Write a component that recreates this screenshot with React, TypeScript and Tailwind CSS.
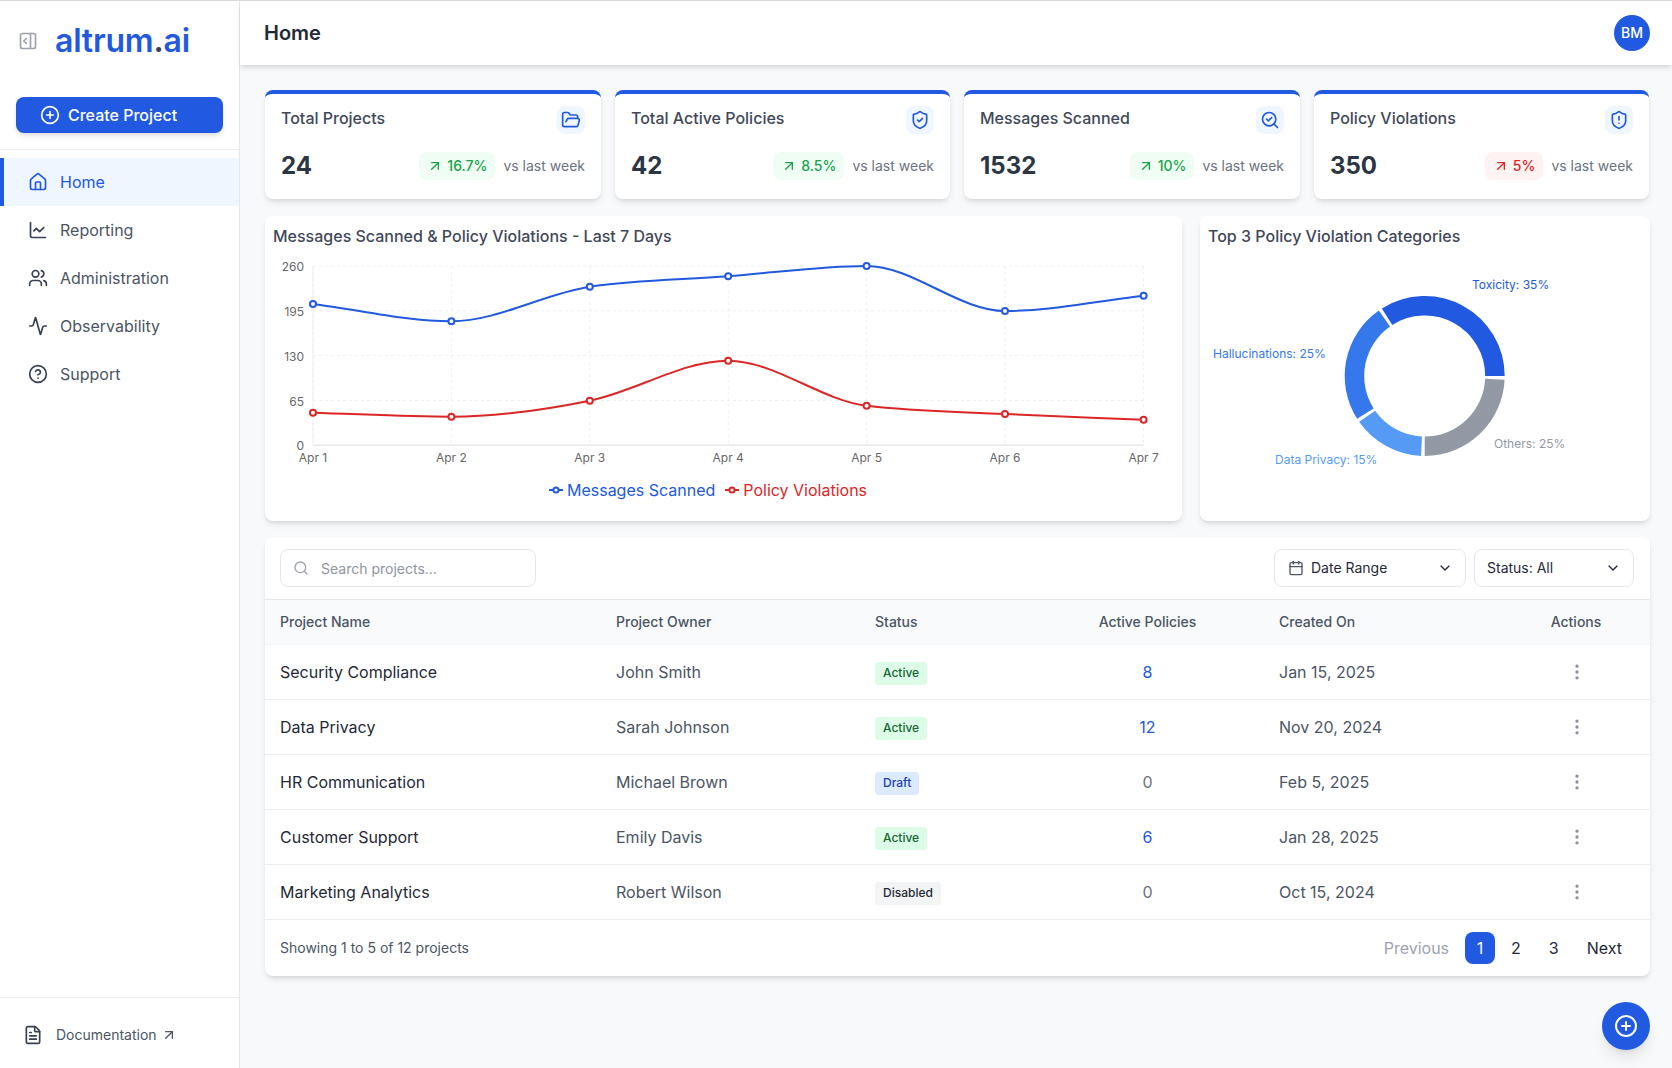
import {
  Activity,
  ArrowUpRight,
  Calendar,
  ChartLine,
  ChevronDown,
  CircleHelp,
  CirclePlus,
  EllipsisVertical,
  FileText,
  FolderOpen,
  House,
  PanelRightOpen,
  Search,
  SearchCheck,
  ShieldAlert,
  ShieldCheck,
  Users,
} from "lucide-react"

const navItems = [
  { label: "Reporting", icon: ChartLine },
  { label: "Administration", icon: Users },
  { label: "Observability", icon: Activity },
  { label: "Support", icon: CircleHelp },
]

const kpis = [
  { title: "Total Projects", value: "24", delta: "16.7%", icon: FolderOpen, bad: false },
  { title: "Total Active Policies", value: "42", delta: "8.5%", icon: ShieldCheck, bad: false },
  { title: "Messages Scanned", value: "1532", delta: "10%", icon: SearchCheck, bad: false },
  { title: "Policy Violations", value: "350", delta: "5%", icon: ShieldAlert, bad: true },
]

const projects = [
  { name: "Security Compliance", owner: "John Smith", status: "Active", policies: 8, created: "Jan 15, 2025" },
  { name: "Data Privacy", owner: "Sarah Johnson", status: "Active", policies: 12, created: "Nov 20, 2024" },
  { name: "HR Communication", owner: "Michael Brown", status: "Draft", policies: 0, created: "Feb 5, 2025" },
  { name: "Customer Support", owner: "Emily Davis", status: "Active", policies: 6, created: "Jan 28, 2025" },
  { name: "Marketing Analytics", owner: "Robert Wilson", status: "Disabled", policies: 0, created: "Oct 15, 2024" },
]

const statusClass: Record<string, string> = {
  Active: "bg-[#dcfce7] text-[#166534]",
  Draft: "bg-[#dbeafe] text-[#1e40af]",
  Disabled: "bg-[#f3f4f6] text-[#1f2937]",
}

// chart coordinates, relative to the svg
const xs = [48, 186.4, 324.8, 463.2, 601.6, 740, 878.6]
const blueYs = [56, 73.3, 38.7, 28.3, 18, 63, 47.7]
const redYs = [164.7, 168.7, 152.7, 112.7, 157.7, 166, 171.7]
const yTicks = [
  { label: "260", y: 18 },
  { label: "195", y: 62.8 },
  { label: "130", y: 107.6 },
  { label: "65", y: 152.5 },
  { label: "0", y: 197.3 },
]
const days = ["Apr 1", "Apr 2", "Apr 3", "Apr 4", "Apr 5", "Apr 6", "Apr 7"]

// same maths as d3's curveMonotoneX
const monotonePath = (px: number[], py: number[]) => {
  const n = px.length
  const d: number[] = []
  const m: number[] = []
  for (let i = 0; i < n - 1; i++) m.push((py[i + 1] - py[i]) / (px[i + 1] - px[i]))
  d.push(m[0])
  for (let i = 1; i < n - 1; i++) {
    if (m[i - 1] * m[i] <= 0) d.push(0)
    else {
      const h0 = px[i] - px[i - 1]
      const h1 = px[i + 1] - px[i]
      const p = (m[i - 1] * h1 + m[i] * h0) / (h0 + h1)
      const sign = m[i - 1] > 0 ? 1 : -1
      d.push(sign * Math.min(Math.abs(m[i - 1]), Math.abs(m[i]), 0.5 * Math.abs(p)) * 2)
    }
  }
  d.push(m[n - 2])
  let path = `M${px[0]},${py[0]}`
  for (let i = 0; i < n - 1; i++) {
    const h = (px[i + 1] - px[i]) / 3
    path += `C${px[i] + h},${py[i] + h * d[i]} ${px[i + 1] - h},${py[i + 1] - h * d[i + 1]} ${px[i + 1]},${py[i + 1]}`
  }
  return path
}

const slices = [
  { pct: 0.35, color: "#2159e0" },
  { pct: 0.25, color: "#3578ec" },
  { pct: 0.15, color: "#559bf6" },
  { pct: 0.25, color: "#9299a4" },
]

const arcPath = (from: number, to: number) => {
  const cx = 224.7
  const cy = 128
  const R = 80
  const r = 60.5
  const rad = (a: number) => (a * Math.PI) / 180
  const pt = (rr: number, a: number) => `${cx + rr * Math.cos(rad(a))},${cy - rr * Math.sin(rad(a))}`
  const large = to - from > 180 ? 1 : 0
  return `M${pt(R, from)}A${R},${R} 0 ${large} 0 ${pt(R, to)}L${pt(r, to)}A${r},${r} 0 ${large} 1 ${pt(r, from)}Z`
}

const LineChart = () => (
  <svg width="917" height="225" className="block">
    {yTicks.map((t) => (
      <line key={t.label} x1={48} x2={878.6} y1={t.y} y2={t.y} stroke="#eef0f3" strokeDasharray="3 3" />
    ))}
    {xs.map((x) => (
      <line key={x} x1={x} x2={x} y1={18} y2={197} stroke="#eef0f3" strokeDasharray="3 3" />
    ))}
    <line x1={48} x2={48} y1={18} y2={197.3} stroke="#eceef1" />
    <line x1={48} x2={878.6} y1={197.3} y2={197.3} stroke="#e8eaee" strokeWidth={1.5} />
    {yTicks.map((t) => (
      <text key={t.label} x={39} y={t.y + 5} textAnchor="end" fontSize={12} fill="#666666">
        {t.label}
      </text>
    ))}
    {days.map((day, i) => (
      <text key={day} x={xs[i]} y={214} textAnchor="middle" fontSize={12} fill="#666666">
        {day}
      </text>
    ))}
    <path d={monotonePath(xs, blueYs)} fill="none" stroke="#2159e0" strokeWidth={2} />
    <path d={monotonePath(xs, redYs)} fill="none" stroke="#dc2626" strokeWidth={2} />
    {xs.map((x, i) => (
      <circle key={x} cx={x} cy={blueYs[i]} r={3} fill="#ffffff" stroke="#2159e0" strokeWidth={2} />
    ))}
    {xs.map((x, i) => (
      <circle key={x} cx={x} cy={redYs[i]} r={3} fill="#ffffff" stroke="#dc2626" strokeWidth={2} />
    ))}
  </svg>
)

const LegendIcon = ({ color }: { color: string }) => (
  <svg width="14" height="14" viewBox="0 0 14 14">
    <line x1="0" x2="14" y1="7" y2="7" stroke={color} strokeWidth="2" />
    <circle cx="7" cy="7" r="2.6" fill="#ffffff" stroke={color} strokeWidth="2" />
  </svg>
)

const DonutChart = () => {
  const pad = 2.6
  let angle = 0
  return (
    <svg width="449" height="273" className="block">
      {slices.map((s) => {
        const sweep = (360 - pad * slices.length) * s.pct
        const d = arcPath(angle, angle + sweep)
        angle += sweep + pad
        return <path key={s.color} d={d} fill={s.color} />
      })}
      <text x={272} y={41} fontSize={12} fill="#2159e0">Toxicity: 35%</text>
      <text x={13} y={110} fontSize={12} fill="#3578ec">Hallucinations: 25%</text>
      <text x={75} y={216} fontSize={12} fill="#559bf6">Data Privacy: 15%</text>
      <text x={294} y={200} fontSize={12} fill="#9299a4">Others: 25%</text>
    </svg>
  )
}

export default function App() {
  return (
    <div className="relative flex h-[1068px] overflow-hidden border-t border-[#d9d9d9] bg-[#f8f9fb] font-['Inter',sans-serif]">
      <aside className="flex w-[240px] shrink-0 flex-col border-r border-[#e5e7eb] bg-white">
        <div className="flex h-[80px] items-center gap-[17px] pl-[18px]">
          <PanelRightOpen className="size-5 text-[#9ca3af]" />
          <div className="text-[32px] leading-none font-semibold tracking-[-0.2px] text-[#2159e0]">
            altrum<span className="text-[#374151]">.</span>ai
          </div>
        </div>
        <div className="border-b border-[#eceef1] px-4 pt-4 pb-4">
          <button className="flex h-[36px] w-[207px] items-center gap-2 rounded-lg bg-[#2159e0] pl-6 font-medium text-white shadow-md">
            <CirclePlus className="size-5" />
            Create Project
          </button>
        </div>
        <nav className="mt-2 flex flex-col">
          <div className="flex h-[48px] items-center gap-3 border-l-4 border-[#2159e0] bg-[#eff6ff] pl-[24px] text-[#2159e0]">
            <House className="size-5" />
            Home
          </div>
          {navItems.map((item) => (
            <div key={item.label} className="flex h-[48px] items-center gap-3 pl-[28px] text-[#4b5563]">
              <item.icon className="size-5 text-[#374151]" />
              {item.label}
            </div>
          ))}
        </nav>
        <div className="mt-auto flex h-[71px] items-center border-t border-[#eceef1] pt-[3px] pl-[23px] text-sm text-[#4b5563]">
          <FileText className="size-5 text-[#374151]" />
          <span className="ml-[13px]">Documentation</span>
          <ArrowUpRight className="ml-1 size-4" />
        </div>
      </aside>

      <div className="flex min-w-0 flex-1 flex-col">
        <header className="flex h-[64px] shrink-0 items-center justify-between bg-white pr-[22px] pl-[24px] shadow-md">
          <h1 className="text-[20px] font-semibold text-[#1f2937]">Home</h1>
          <div className="flex size-9 items-center justify-center rounded-full bg-[#2159e0] text-sm font-medium text-white">
            BM
          </div>
        </header>

        <main className="flex flex-col pt-[25px] pr-[22px] pl-[25px]">
          <section className="grid grid-cols-[336px_335px_336px_335px] gap-[14px]">
            {kpis.map((kpi) => (
              <div
                key={kpi.title}
                className="rounded-lg border-t-4 border-[#2159e0] bg-white px-4 pt-3 pb-[19px] shadow-md"
              >
                <div className="flex items-start justify-between">
                  <div className="font-medium text-[#3f4858]">{kpi.title}</div>
                  <div className="flex size-7 items-center justify-center rounded-lg bg-[#eff6ff]">
                    <kpi.icon className="size-5 text-[#2159e0]" />
                  </div>
                </div>
                <div className="mt-[18px] flex items-center justify-between">
                  <div className="text-2xl leading-7 font-bold text-[#2b3543]">{kpi.value}</div>
                  <div className="flex items-center gap-2">
                    <div
                      className={
                        kpi.bad
                          ? "flex h-7 items-center gap-1 rounded-lg bg-[#fef2f2] px-2 text-sm font-medium text-[#dc2626]"
                          : "flex h-7 items-center gap-1 rounded-lg bg-[#f0fdf4] px-2 text-sm font-medium text-[#16a34a]"
                      }
                    >
                      <ArrowUpRight className="size-4" />
                      {kpi.delta}
                    </div>
                    <span className="text-sm text-[#6b7280]">vs last week</span>
                  </div>
                </div>
              </div>
            ))}
          </section>

          <section className="mt-[17px] flex h-[305px] gap-[18px]">
            <div className="w-[917px] rounded-lg bg-white pt-2 shadow-md">
              <h2 className="pl-2 font-medium text-[#3f4858]">Messages Scanned &amp; Policy Violations - Last 7 Days</h2>
              <LineChart />
              <div className="mt-[5px] flex items-center justify-center gap-[10px] pr-[31px]">
                <div className="flex items-center gap-1 text-[#2159e0]">
                  <LegendIcon color="#2159e0" />
                  Messages Scanned
                </div>
                <div className="flex items-center gap-1 text-[#dc2626]">
                  <LegendIcon color="#dc2626" />
                  Policy Violations
                </div>
              </div>
            </div>
            <div className="flex-1 rounded-lg bg-white pt-2 shadow-md">
              <h2 className="pl-2 font-medium text-[#3f4858]">Top 3 Policy Violation Categories</h2>
              <DonutChart />
            </div>
          </section>

          <section className="mt-4 rounded-lg bg-white shadow-md">
            <div className="flex h-[62px] items-center justify-between pr-4 pl-[15px]">
              <div className="flex h-[38px] w-[256px] items-center gap-3 rounded-lg border border-[#e5e7eb] pl-3 text-sm text-[#8d94a1]">
                <Search className="size-4 text-[#9ca3af]" />
                <span className="mt-px">Search projects...</span>
              </div>
              <div className="flex gap-2">
                <div className="flex h-[38px] w-[192px] items-center rounded-lg border border-[#e5e7eb] pr-3 pl-[13px] text-sm text-[#1f2937]">
                  <Calendar className="size-4 text-[#4b5563]" />
                  <span className="ml-[7px]">Date Range</span>
                  <ChevronDown className="ml-auto size-4" />
                </div>
                <div className="flex h-[38px] w-[160px] items-center rounded-lg border border-[#e5e7eb] pr-3 pl-3 text-sm text-[#1f2937]">
                  Status: All
                  <ChevronDown className="ml-auto size-4" />
                </div>
              </div>
            </div>

            <div className="grid h-[46px] grid-cols-[336px_259px_171px_233px_272px_1fr] items-center border-y border-t-[#e5e7eb] border-b-[#f3f4f6] bg-[#f9fafb] text-sm font-medium text-[#4b5563]">
              <div className="pl-[15px]">Project Name</div>
              <div className="pl-[15px]">Project Owner</div>
              <div className="pl-[15px]">Status</div>
              <div className="text-center">Active Policies</div>
              <div className="pl-[15px]">Created On</div>
              <div className="pr-[34px] text-center">Actions</div>
            </div>

            {projects.map((p) => (
              <div
                key={p.name}
                className="grid h-[55px] grid-cols-[336px_259px_171px_233px_272px_1fr] items-center border-b border-[#eceef1] last:border-[#e5e7eb]"
              >
                <div className="pl-[15px] text-[#1f2937]">{p.name}</div>
                <div className="pl-[15px] text-[#4b5563]">{p.owner}</div>
                <div className="pl-[15px]">
                  <span className={`inline-flex h-[23px] items-center rounded px-2 text-xs font-medium ${statusClass[p.status]}`}>
                    {p.status}
                  </span>
                </div>
                <div className={p.policies > 0 ? "text-center text-[#2159e0]" : "text-center text-[#6b7280]"}>
                  {p.policies}
                </div>
                <div className="pl-[15px] text-[#4b5563]">{p.created}</div>
                <div className="-mt-px flex justify-center pr-[32px]">
                  <EllipsisVertical className="size-5 text-[#8b929e]" />
                </div>
              </div>
            ))}

            <div className="flex h-[56px] items-center justify-between pr-4 pl-[15px]">
              <div className="text-sm text-[#4b5563]">Showing 1 to 5 of 12 projects</div>
              <div className="flex items-center gap-1">
                <div className="px-3 text-[#9ca3af]">Previous</div>
                <div className="flex h-8 w-[30px] items-center justify-center rounded-lg bg-[#2159e0] text-white">1</div>
                <div className="px-3 text-[#1f2937]">2</div>
                <div className="px-3 text-[#1f2937]">3</div>
                <div className="px-3 text-[#1f2937]">Next</div>
              </div>
            </div>
          </section>
        </main>
      </div>

      <button className="absolute right-[22px] bottom-[18px] flex size-12 items-center justify-center rounded-full bg-[#2159e0] text-white shadow-lg">
        <CirclePlus className="size-6" />
      </button>
    </div>
  )
}
